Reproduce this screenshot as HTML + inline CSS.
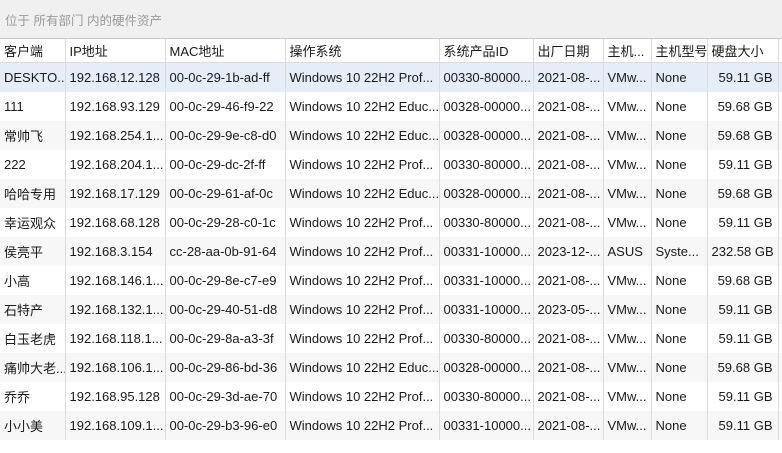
<!DOCTYPE html>
<html><head><meta charset="utf-8"><style>
body{margin:0;width:782px;height:453px;overflow:hidden;background:#fff;font-family:"Liberation Sans","Noto Sans CJK SC",sans-serif;font-size:13px;color:#1a1a1a}
.top{position:absolute;left:0;top:0;width:782px;height:38px;background:#f0f0f0;border-bottom:1px solid #c8c8c8}
.top span{position:absolute;left:5px;top:10px;color:#9a9a9a;font-size:12.5px}
table{position:absolute;left:0;top:39px;border-collapse:collapse;table-layout:fixed;width:790px}
td,th{height:29px;padding:0 0 0 4px;white-space:nowrap;overflow:hidden;border-right:1px solid #dcdcdc;text-align:left;font-weight:normal}
th{height:23px;background:#fff;border-bottom:1px solid #dcdcdc}
tr.s td{background:#e4edf8}
tr.g td{background:#f7f7f7}
td.r{text-align:right;padding-right:5px}
td.y{color:#d9a800}
</style></head><body>
<div class="top"><span>位于 所有部门 内的硬件资产</span></div>
<table>
<colgroup><col style="width:65px"><col style="width:100px"><col style="width:120px"><col style="width:154px"><col style="width:94px"><col style="width:70px"><col style="width:48px"><col style="width:56px"><col style="width:71px"><col style="width:12px"></colgroup>
<tr><th>客户端</th><th>IP地址</th><th>MAC地址</th><th>操作系统</th><th>系统产品ID</th><th>出厂日期</th><th>主机...</th><th>主机型号</th><th>硬盘大小</th><th style="color:#d9a800">软</th></tr>
<tr class="s"><td>DESKTO...</td><td>192.168.12.128</td><td>00-0c-29-1b-ad-ff</td><td>Windows 10 22H2 Prof...</td><td>00330-80000...</td><td>2021-08-...</td><td>VMw...</td><td>None</td><td class="r">59.11 GB</td><td class="y">'</td></tr>
<tr><td>111</td><td>192.168.93.129</td><td>00-0c-29-46-f9-22</td><td>Windows 10 22H2 Educ...</td><td>00328-00000...</td><td>2021-08-...</td><td>VMw...</td><td>None</td><td class="r">59.68 GB</td><td class="y">'</td></tr>
<tr class="g"><td>常帅飞</td><td>192.168.254.1...</td><td>00-0c-29-9e-c8-d0</td><td>Windows 10 22H2 Educ...</td><td>00328-00000...</td><td>2021-08-...</td><td>VMw...</td><td>None</td><td class="r">59.68 GB</td><td class="y">'</td></tr>
<tr><td>222</td><td>192.168.204.1...</td><td>00-0c-29-dc-2f-ff</td><td>Windows 10 22H2 Prof...</td><td>00330-80000...</td><td>2021-08-...</td><td>VMw...</td><td>None</td><td class="r">59.11 GB</td><td class="y">'</td></tr>
<tr class="g"><td>哈哈专用</td><td>192.168.17.129</td><td>00-0c-29-61-af-0c</td><td>Windows 10 22H2 Educ...</td><td>00328-00000...</td><td>2021-08-...</td><td>VMw...</td><td>None</td><td class="r">59.68 GB</td><td class="y">'</td></tr>
<tr><td>幸运观众</td><td>192.168.68.128</td><td>00-0c-29-28-c0-1c</td><td>Windows 10 22H2 Prof...</td><td>00330-80000...</td><td>2021-08-...</td><td>VMw...</td><td>None</td><td class="r">59.11 GB</td><td class="y">'</td></tr>
<tr class="g"><td>侯亮平</td><td>192.168.3.154</td><td>cc-28-aa-0b-91-64</td><td>Windows 10 22H2 Prof...</td><td>00331-10000...</td><td>2023-12-...</td><td>ASUS</td><td>Syste...</td><td class="r">232.58 GB</td><td class="y">'</td></tr>
<tr><td>小高</td><td>192.168.146.1...</td><td>00-0c-29-8e-c7-e9</td><td>Windows 10 22H2 Prof...</td><td>00331-10000...</td><td>2021-08-...</td><td>VMw...</td><td>None</td><td class="r">59.68 GB</td><td class="y">'</td></tr>
<tr class="g"><td>石特产</td><td>192.168.132.1...</td><td>00-0c-29-40-51-d8</td><td>Windows 10 22H2 Prof...</td><td>00331-10000...</td><td>2023-05-...</td><td>VMw...</td><td>None</td><td class="r">59.11 GB</td><td class="y">'</td></tr>
<tr><td>白玉老虎</td><td>192.168.118.1...</td><td>00-0c-29-8a-a3-3f</td><td>Windows 10 22H2 Prof...</td><td>00330-80000...</td><td>2021-08-...</td><td>VMw...</td><td>None</td><td class="r">59.11 GB</td><td class="y">'</td></tr>
<tr class="g"><td>痛帅大老...</td><td>192.168.106.1...</td><td>00-0c-29-86-bd-36</td><td>Windows 10 22H2 Educ...</td><td>00328-00000...</td><td>2021-08-...</td><td>VMw...</td><td>None</td><td class="r">59.68 GB</td><td class="y">'</td></tr>
<tr><td>乔乔</td><td>192.168.95.128</td><td>00-0c-29-3d-ae-70</td><td>Windows 10 22H2 Prof...</td><td>00330-80000...</td><td>2021-08-...</td><td>VMw...</td><td>None</td><td class="r">59.11 GB</td><td class="y">'</td></tr>
<tr class="g"><td>小小美</td><td>192.168.109.1...</td><td>00-0c-29-b3-96-e0</td><td>Windows 10 22H2 Prof...</td><td>00331-10000...</td><td>2021-08-...</td><td>VMw...</td><td>None</td><td class="r">59.11 GB</td><td class="y">'</td></tr>
</table>
</body></html>
